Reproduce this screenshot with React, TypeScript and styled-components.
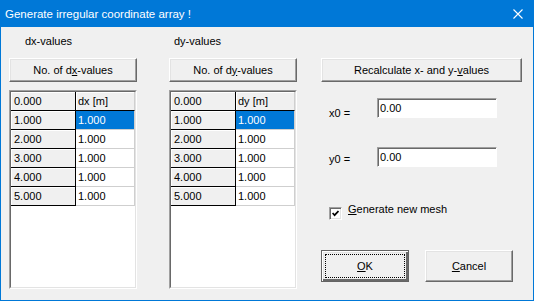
import React from "react";
import styled, { createGlobalStyle } from "styled-components";

const Global = createGlobalStyle`
  html, body { margin: 0; padding: 0; background: #ffffff; }
  body {
    font-family: "Liberation Sans", Arial, sans-serif;
    font-size: 11px;
    color: #000;
  }
`;

const Window = styled.div`
  width: 534px;
  height: 301px;
  box-sizing: border-box;
  background: #0078d7;
  padding: 0 1px 1px 1px;
  display: flex;
  flex-direction: column;
`;

const TitleBar = styled.div`
  height: 27px;
  flex: none;
  display: flex;
  align-items: center;
  justify-content: space-between;
  padding: 0 10px 0 4px;
  color: #ffffff;
  font-size: 11.5px;
`;

const Client = styled.div`
  flex: 1;
  background: #f0f0f0;
  display: flex;
  padding-left: 8px;
`;

const Column = styled.div<{ $width: number; $offset: number }>`
  width: ${(p) => p.$width}px;
  margin-left: ${(p) => p.$offset}px;
  display: flex;
  flex-direction: column;
`;

const ColLabel = styled.div<{ $indent: number }>`
  height: 31px;
  box-sizing: border-box;
  padding-top: 8px;
  padding-left: ${(p) => p.$indent}px;
  line-height: 13px;
`;

const PushButton = styled.button`
  height: 24px;
  width: 100%;
  box-sizing: border-box;
  margin: 0;
  padding: 0;
  font: inherit;
  color: #000;
  background: #f0f0f0;
  border: 1px solid;
  border-color: #ffffff #696969 #696969 #ffffff;
  box-shadow: inset -1px -1px #a0a0a0, inset 1px 1px #e3e3e3;
  line-height: 13px;
`;

const TableFrame = styled.div`
  margin-top: 8px;
  height: 199px;
  box-sizing: border-box;
  border: 1px solid;
  border-color: #a0a0a0 #ffffff #ffffff #a0a0a0;
  display: flex;
`;

const TableInner = styled.div`
  flex: 1;
  box-sizing: border-box;
  border: 1px solid;
  border-color: #696969 #e3e3e3 #e3e3e3 #696969;
  background: #ffffff;
  display: grid;
  grid-template-columns: 65px 59px;
  grid-auto-rows: 19px;
  align-content: start;
`;

type CellKind = "fixed" | "head" | "data" | "selected";

const Cell = styled.div<{ $kind: CellKind }>`
  box-sizing: border-box;
  height: 19px;
  line-height: 18px;
  white-space: nowrap;
  overflow: hidden;
  padding-left: ${(p) => (p.$kind === "fixed" ? 3 : 2)}px;
  background: ${(p) =>
    p.$kind === "fixed" || p.$kind === "head"
      ? "#f0f0f0"
      : p.$kind === "selected"
      ? "#0078d7"
      : "#ffffff"};
  color: ${(p) => (p.$kind === "selected" ? "#ffffff" : "#000000")};
  border-right: 1px solid ${(p) => (p.$kind === "fixed" ? "#000000" : "#cfcfcf")};
  border-bottom: 1px solid
    ${(p) => (p.$kind === "fixed" || p.$kind === "head" ? "#000000" : "#cfcfcf")};
  box-shadow: ${(p) =>
    p.$kind === "fixed" || p.$kind === "head" ? "inset 1px 1px #ffffff" : "none"};
`;

const FieldRow = styled.div<{ $top: number }>`
  display: flex;
  align-items: flex-end;
  margin-top: ${(p) => p.$top}px;
  padding-left: 8px;
`;

const FieldLabel = styled.div<{ $drop: number }>`
  width: 48px;
  line-height: 13px;
  margin-bottom: ${(p) => p.$drop}px;
`;

const TextBox = styled.input`
  width: 120px;
  height: 20px;
  box-sizing: border-box;
  margin: 0;
  padding: 0 0 0 2px;
  font: inherit;
  color: #000;
  background: #ffffff;
  border: 1px solid;
  border-color: #a0a0a0 #ffffff #ffffff #a0a0a0;
  box-shadow: inset 1px 1px #696969;
  outline: none;
`;

const CheckRow = styled.div`
  display: flex;
  align-items: flex-start;
  gap: 6px;
  margin-top: 40px;
  padding-left: 8px;
`;

const CheckBox = styled.span`
  width: 13px;
  height: 13px;
  box-sizing: border-box;
  flex: none;
  border: 1px solid;
  border-color: #a0a0a0 #ffffff #ffffff #a0a0a0;
  box-shadow: inset 1px 1px #696969, inset -1px -1px #e3e3e3;
  background: #ffffff;
  display: flex;
  align-items: center;
  justify-content: center;
`;

const CheckLabel = styled.span`
  line-height: 13px;
  margin-top: -4px;
`;

const ButtonRow = styled.div`
  display: flex;
  gap: 16px;
  margin-top: 30px;
`;

const DialogButton = styled.button<{ $default?: boolean }>`
  width: 88px;
  height: 32px;
  box-sizing: border-box;
  margin: 0;
  padding: 0;
  font: inherit;
  color: #000;
  background: #f0f0f0;
  line-height: 13px;
  border: 1px solid;
  border-color: ${(p) =>
    p.$default ? "#646464" : "#ffffff #696969 #696969 #ffffff"};
  box-shadow: ${(p) =>
    p.$default
      ? "inset 1px 1px #ffffff, inset -2px -2px #696969, inset 2px 2px #e3e3e3"
      : "inset -1px -1px #a0a0a0, inset 1px 1px #e3e3e3"};
  outline: ${(p) => (p.$default ? "1px dotted #000000" : "none")};
  outline-offset: -5px;
`;

const rows = [
  ["1.000", "1.000"],
  ["2.000", "1.000"],
  ["3.000", "1.000"],
  ["4.000", "1.000"],
  ["5.000", "1.000"],
];

function ValueTable({ unit }: { unit: string }) {
  return (
    <TableFrame>
      <TableInner>
        <Cell $kind="fixed">0.000</Cell>
        <Cell $kind="head">{unit}</Cell>
        {rows.map(([a, b], i) => (
          <React.Fragment key={a}>
            <Cell $kind="fixed">{a}</Cell>
            <Cell $kind={i === 0 ? "selected" : "data"}>{b}</Cell>
          </React.Fragment>
        ))}
      </TableInner>
    </TableFrame>
  );
}

function CloseIcon() {
  return (
    <svg width="10" height="10" viewBox="0 0 10 10" aria-hidden="true">
      <path d="M0.5 0.5 L9.5 9.5 M9.5 0.5 L0.5 9.5" stroke="#ffffff" strokeWidth="1.1" fill="none" />
    </svg>
  );
}

function CheckMark() {
  return (
    <svg width="7" height="7" viewBox="0 0 7 7" aria-hidden="true">
      <path d="M0.6 3 L2.6 5.2 L6.5 1" stroke="#000000" strokeWidth="1.7" fill="none" />
    </svg>
  );
}

export default function App() {
  return (
    <>
      <Global />
      <Window>
        <TitleBar>
          <span>Generate irregular coordinate array !</span>
          <CloseIcon />
        </TitleBar>
        <Client>
          <Column $width={128} $offset={0}>
            <ColLabel $indent={16}>dx-values</ColLabel>
            <PushButton>
              No. of d<u>x</u>-values
            </PushButton>
            <ValueTable unit="dx [m]" />
          </Column>
          <Column $width={128} $offset={32}>
            <ColLabel $indent={5}>dy-values</ColLabel>
            <PushButton>
              No. of d<u>y</u>-values
            </PushButton>
            <ValueTable unit="dy [m]" />
          </Column>
          <Column $width={201} $offset={24}>
            <ColLabel $indent={0} />
            <PushButton>
              Recalculate x- and y-<u>v</u>alues
            </PushButton>
            <FieldRow $top={16}>
              <FieldLabel $drop={-2}>x0 =</FieldLabel>
              <TextBox readOnly defaultValue="0.00" />
            </FieldRow>
            <FieldRow $top={29}>
              <FieldLabel $drop={1}>y0 =</FieldLabel>
              <TextBox readOnly defaultValue="0.00" />
            </FieldRow>
            <CheckRow>
              <CheckBox>
                <CheckMark />
              </CheckBox>
              <CheckLabel>
                <u>G</u>enerate new mesh
              </CheckLabel>
            </CheckRow>
            <ButtonRow>
              <DialogButton $default>
                <u>O</u>K
              </DialogButton>
              <DialogButton>
                <u>C</u>ancel
              </DialogButton>
            </ButtonRow>
          </Column>
        </Client>
      </Window>
    </>
  );
}
